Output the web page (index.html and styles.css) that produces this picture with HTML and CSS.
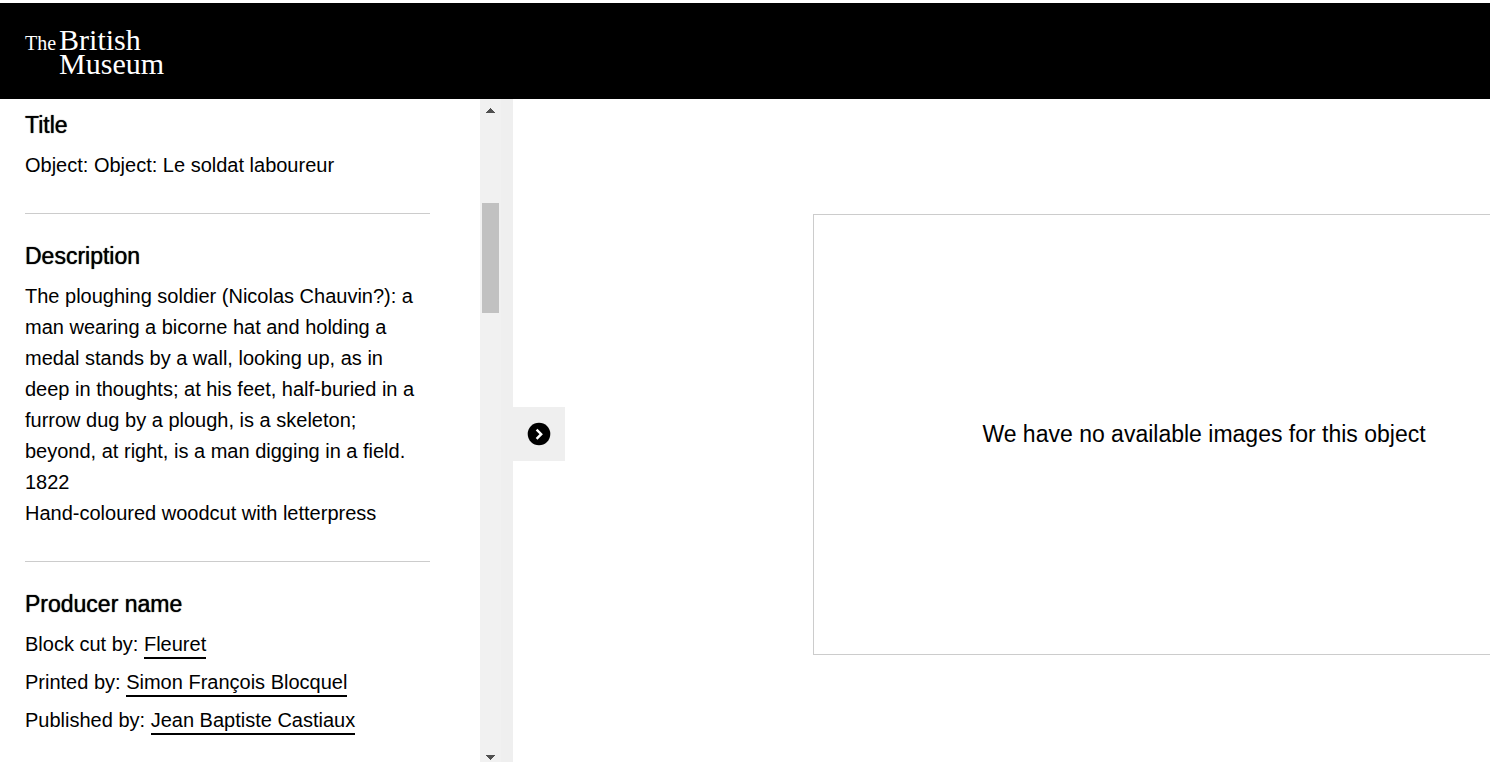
FILE: index.html
```html
<!DOCTYPE html>
<html lang="en">
<head>
<meta charset="utf-8">
<title>The British Museum</title>
<link rel="stylesheet" href="styles.css">
</head>
<body>
<header class="site-header">
  <a class="logo" href="#">
    <span class="logo-the">The</span>
    <span class="logo-name">British<br>Museum</span>
  </a>
</header>
<main class="layout">
  <aside class="details">
    <section class="detail">
      <h2>Title</h2>
      <p>Object: Object: Le soldat laboureur</p>
    </section>
    <section class="detail">
      <h2>Description</h2>
      <p>The ploughing soldier (Nicolas Chauvin?): a man wearing a bicorne hat and holding a medal stands by a wall, looking up, as in deep in thoughts; at his feet, half-buried in a furrow dug by a plough, is a skeleton; beyond, at right, is a man digging in a field. 1822<br>Hand-coloured woodcut with letterpress</p>
    </section>
    <section class="detail">
      <h2>Producer name</h2>
      <ul class="producers">
        <li>Block cut by: <a href="#">Fleuret</a></li>
        <li>Printed by: <a href="#">Simon François Blocquel</a></li>
        <li>Published by: <a href="#">Jean Baptiste Castiaux</a></li>
      </ul>
    </section>
  </aside>
  <div class="rail">
    <div class="scrollbar">
      <svg class="arrow" width="9" height="5" viewBox="0 0 9 5" shape-rendering="crispEdges"><path d="M4 0h1v1h1v1h1v1h1v1h1v1H0V4h1V3h1V2h1V1h1z"/></svg>
      <div class="thumb"></div>
      <svg class="arrow arrow-down" width="9" height="5" viewBox="0 0 9 5" shape-rendering="crispEdges"><path d="M0 0h9v1H8v1H7v1H6v1H5v1H4V4H3V3H2V2H1V1H0z"/></svg>
    </div>
  </div>
  <section class="viewer">
    <button class="toggle" type="button" aria-label="Expand details">
      <svg width="24" height="24" viewBox="0 0 24 24"><circle cx="12" cy="12" r="11.3"/><path d="M9.6 7.6L14.2 12.2L9.6 16.8" fill="none" stroke="#fff" stroke-width="2.4"/></svg>
    </button>
    <div class="frame"><p>We have no available images for this object</p></div>
  </section>
</main>
</body>
</html>
```
FILE: styles.css
```css
* { box-sizing: border-box; }
body {
  margin: 0;
  height: 100vh;
  padding-top: 3px;
  display: flex;
  flex-direction: column;
  overflow: hidden;
  background: #fff;
  color: #000;
  font: 20px/31px "Liberation Sans", Arial, sans-serif;
}
h2, p, ul { margin: 0; padding: 0; }
.site-header {
  flex: none;
  background: #000;
  padding: 25px 25px 23px;
}
.logo {
  display: flex;
  align-items: baseline;
  gap: 3px;
  color: #fff;
  text-decoration: none;
  font-family: "Liberation Serif", "Times New Roman", serif;
  line-height: 24px;
}
.logo-the { font-size: 20px; }
.logo-name { font-size: 30px; }
.layout {
  flex: 1;
  min-height: 0;
  display: flex;
}
.details {
  flex: none;
  width: 480px;
  padding: 11px 50px 0 25px;
  overflow: hidden;
}
.detail { padding-bottom: 32px; }
.detail + .detail {
  border-top: 1px solid #ccc;
  padding-top: 27px;
}
h2 {
  margin-bottom: 9px;
  font-size: 23px;
  font-weight: 400;
  line-height: 31px;
  text-shadow: 0 0 1px #000;
}
.producers {
  list-style: none;
  display: grid;
  gap: 7px;
}
.producers a {
  color: inherit;
  text-decoration: none;
  padding-bottom: 2px;
  border-bottom: 2px solid #000;
}
.rail {
  flex: none;
  width: 33px;
  background: #efefef;
}
.scrollbar {
  width: 21px;
  height: 100%;
  padding: 9px 2px 2px;
  display: flex;
  flex-direction: column;
  align-items: center;
  background: #f1f1f1;
}
.arrow { display: block; fill: #505050; }
.thumb {
  width: 17px;
  height: 110px;
  margin-top: 90px;
  background: #c1c1c1;
}
.arrow-down { margin-top: auto; }
.viewer {
  position: relative;
  flex: 1;
  min-width: 0;
  padding: 115px 0 0 300px;
}
.toggle {
  position: absolute;
  left: 0;
  top: 308px;
  width: 52px;
  height: 54px;
  padding: 0;
  border: 0;
  display: flex;
  align-items: center;
  justify-content: center;
  background: #efefef;
}
.frame {
  height: 441px;
  padding-left: 104px;
  border: 1px solid #ccc;
  border-right: 0;
  display: flex;
  align-items: center;
  justify-content: center;
  font-size: 23px;
}
```
